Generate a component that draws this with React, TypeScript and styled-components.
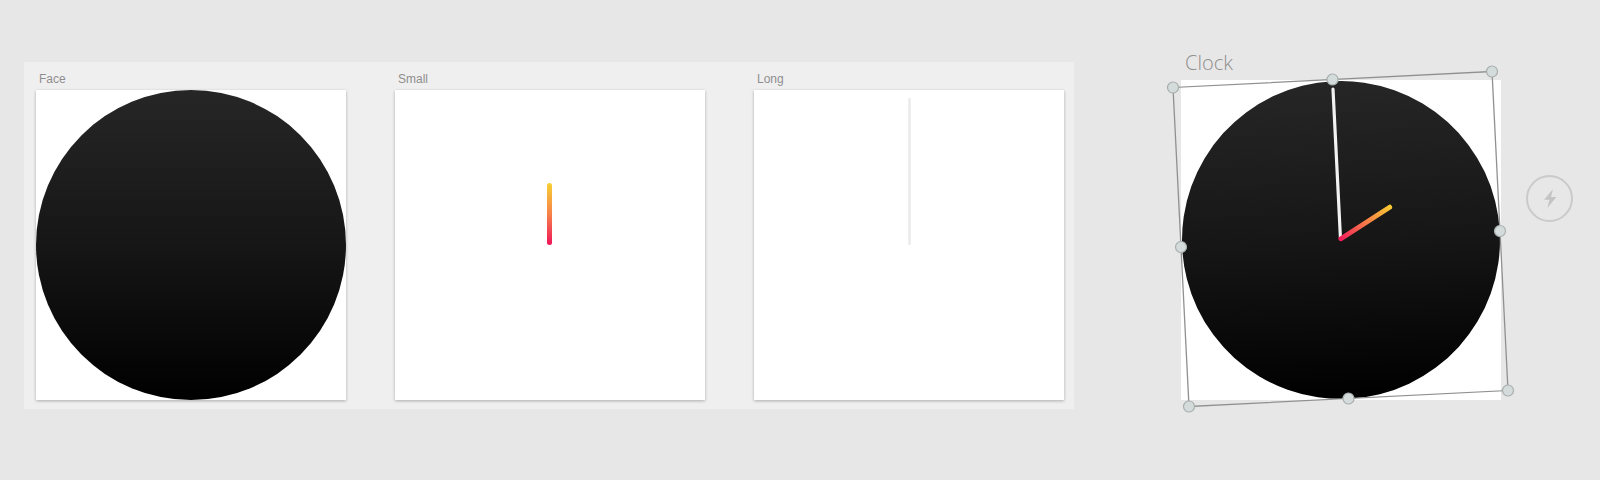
import React from "react";
import styled, { createGlobalStyle } from "styled-components";

const Global = createGlobalStyle`
  html, body { margin: 0; padding: 0; }
  body {
    background: #e8e7e7;
    font-family: "Liberation Sans", Arial, sans-serif;
    width: 1600px;
    height: 480px;
    overflow: hidden;
  }
`;

const Page = styled.div`
  display: flex;
  align-items: flex-start;
  padding: 51px 0 0 24px;
`;

const Panel = styled.section`
  margin-top: 11px;
  width: 1050px;
  box-sizing: border-box;
  padding: 10px 10px 9px 12px;
  background: #f0efef;
  display: grid;
  grid-template-columns: repeat(3, 310px);
  column-gap: 49px;
`;

const Column = styled.div`
  display: flex;
  flex-direction: column;
`;

const Label = styled.div`
  font-size: 12px;
  line-height: 14px;
  height: 14px;
  color: #8e8e8e;
  padding-left: 3px;
  margin-bottom: 4px;
`;

const Card = styled.div`
  position: relative;
  width: 310px;
  height: 310px;
  background: #ffffff;
  box-shadow: 0 1px 3px rgba(0, 0, 0, 0.28);
`;

const FaceCircle = styled.div<{ $size: number; $rotate?: number }>`
  width: ${(p) => p.$size}px;
  height: ${(p) => p.$size}px;
  border-radius: 50%;
  background: linear-gradient(180deg, #262626 0%, #161616 50%, #000000 100%);
  transform: rotate(${(p) => p.$rotate ?? 0}deg);
`;

const HandSvg = styled.svg`
  display: block;
  width: 310px;
  height: 310px;
`;

const ClockArea = styled.div`
  margin-left: 107px;
  display: flex;
  flex-direction: column;
`;

const ClockTitle = styled.div`
  font-family: "Open Sans", "Liberation Sans", sans-serif;
  font-weight: 300;
  font-size: 20px;
  line-height: 24px;
  height: 24px;
  color: #8f8f8f;
  padding-left: 4px;
  margin-bottom: 5px;
`;

const Canvas = styled.div`
  position: relative;
  width: 320px;
  height: 320px;
  background: #ffffff;
  display: flex;
  align-items: center;
  justify-content: center;
`;

const Overlay = styled.svg`
  position: absolute;
  left: 0;
  top: 0;
  width: 320px;
  height: 320px;
  overflow: visible;
  pointer-events: none;
`;

const ActionButton = styled.button`
  margin: 124px 0 0 25px;
  width: 47px;
  height: 47px;
  box-sizing: border-box;
  border-radius: 50%;
  border: 2px solid #cacaca;
  background: transparent;
  padding: 0;
  display: flex;
  align-items: center;
  justify-content: center;
  cursor: pointer;
`;

const Handle: React.FC<{ x: number; y: number }> = ({ x, y }) => (
  <circle cx={x} cy={y} r={5.5} fill="#d4dbdb" stroke="#a9afaf" strokeWidth={1.2} />
);

export default function App() {
  const cx = 159.5;
  const cy = 159;
  const h = 159.7;
  return (
    <>
      <Global />
      <Page>
        <Panel>
          <Column>
            <Label>Face</Label>
            <Card>
              <FaceCircle $size={310} />
            </Card>
          </Column>
          <Column>
            <Label>Small</Label>
            <Card>
              <HandSvg viewBox="0 0 310 310">
                <defs>
                  <linearGradient id="smallGrad" x1="0" y1="0" x2="0" y2="1">
                    <stop offset="0" stopColor="#f7d132" />
                    <stop offset="0.5" stopColor="#f7824a" />
                    <stop offset="1" stopColor="#ef1459" />
                  </linearGradient>
                </defs>
                <rect x={152} y={93} width={5} height={62} rx={2.5} fill="url(#smallGrad)" />
              </HandSvg>
            </Card>
          </Column>
          <Column>
            <Label>Long</Label>
            <Card>
              <HandSvg viewBox="0 0 310 310">
                <rect x={154.2} y={8} width={2.6} height={147} rx={1.3} fill="#ebebeb" />
              </HandSvg>
            </Card>
          </Column>
        </Panel>

        <ClockArea>
          <ClockTitle>Clock</ClockTitle>
          <Canvas>
            <FaceCircle $size={318} $rotate={-2.87} />
            <Overlay viewBox="0 0 320 320">
              <defs>
                <linearGradient id="hourGradV" x1="0" y1="1" x2="0" y2="0">
                  <stop offset="0" stopColor="#f0155a" />
                  <stop offset="0.45" stopColor="#f6704c" />
                  <stop offset="1" stopColor="#f8cd30" />
                </linearGradient>
              </defs>
              <g transform={`rotate(-2.87 ${cx} ${cy})`}>
                <line
                  x1={cx}
                  y1={cy}
                  x2={cx}
                  y2={cy - 150}
                  stroke="#f2f2f2"
                  strokeWidth={3.2}
                  strokeLinecap="round"
                />
                <g transform={`rotate(60 ${cx} ${cy})`}>
                  <rect
                    x={cx - 2.5}
                    y={cy - 61}
                    width={5}
                    height={63}
                    rx={2.5}
                    fill="url(#hourGradV)"
                  />
                </g>
                <rect
                  x={cx - h}
                  y={cy - h}
                  width={h * 2}
                  height={h * 2}
                  fill="none"
                  stroke="#8f9191"
                  strokeWidth={1.3}
                />
                <Handle x={cx - h} y={cy - h} />
                <Handle x={cx} y={cy - h} />
                <Handle x={cx + h} y={cy - h} />
                <Handle x={cx + h} y={cy} />
                <Handle x={cx + h} y={cy + h} />
                <Handle x={cx} y={cy + h} />
                <Handle x={cx - h} y={cy + h} />
                <Handle x={cx - h} y={cy} />
              </g>
            </Overlay>
          </Canvas>
        </ClockArea>

        <ActionButton aria-label="Action">
          <svg width="14" height="19" viewBox="0 0 14 19">
            <path d="M10 0 L1 10.8 L6.4 10.8 L4.4 19 L13.4 8 L8 8 Z" fill="#c4c4c4" />
          </svg>
        </ActionButton>
      </Page>
    </>
  );
}
